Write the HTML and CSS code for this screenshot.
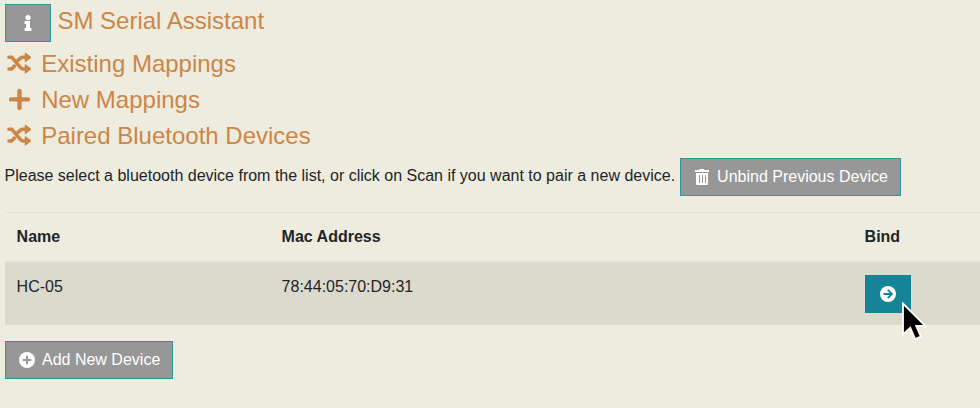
FILE: index.html
```
<!DOCTYPE html>
<html lang="en">
<head>
<meta charset="utf-8">
<title>SM Serial Assistant</title>
<link rel="stylesheet" href="styles.css">
</head>
<body>
<svg class="defs" aria-hidden="true">
  <symbol id="random" viewBox="0 0 24 24">
    <path d="M1.9 6.3H4.8L13.6 16.7Q14.7 17.9 16 17.9H18.5M1.9 17.9H4.8L7.4 15M10.9 9.4L13.6 7.1Q14.5 6.3 16 6.3H18.5" fill="none" stroke="currentColor" stroke-width="3.5" stroke-linejoin="round" stroke-linecap="round"/>
    <path d="M17.7 2.3v8q.2 1 1.3.4l4.6-3.5q.8-.8 0-1.7L19 1.9q-1.1-.5-1.3.4zM17.7 13.9v8q.2 1 1.3.4l4.6-3.5q.8-.8 0-1.7L19 13.5q-1.1-.5-1.3.4z" fill="currentColor"/>
  </symbol>
</svg>
<header class="title">
  <button class="btn info" aria-label="Information">
    <svg width="8" height="16" viewBox="0 0 8 16"><circle cx="4" cy="2.6" r="2.6" fill="currentColor"/><path d="M.6 6.1h5.4v7h1.5v2.9H.6v-2.9h1.5V9H.6z" fill="currentColor"/></svg>
  </button>
  <h4>SM Serial Assistant</h4>
</header>
<h4 class="section"><svg class="icon"><use href="#random"/></svg>Existing Mappings</h4>
<h4 class="section"><svg class="icon" viewBox="0 0 24 24"><path d="M12.5 3.9v17M4 12.4h17" stroke="currentColor" stroke-width="4.4" stroke-linecap="round"/></svg>New Mappings</h4>
<h4 class="section"><svg class="icon"><use href="#random"/></svg>Paired Bluetooth Devices</h4>
<div class="prompt">
  <span>Please select a bluetooth device from the list, or click on Scan if you want to pair a new device.</span>
  <button class="btn unbind">
    <svg width="16" height="16" viewBox="0 0 16 16"><path d="M1 1h4l.7-1h4l.7 1H15v2H1zM2 4h12v10.5Q14 16 12.5 16h-9Q2 16 2 14.5z" fill="currentColor"/><path d="M5.5 6v8M8.5 6v8M11.5 6v8" stroke="#979797"/></svg>
    <span>Unbind Previous Device</span>
  </button>
</div>
<table class="devices">
  <colgroup><col class="name"><col class="mac"><col></colgroup>
  <thead><tr><th>Name</th><th>Mac Address</th><th>Bind</th></tr></thead>
  <tbody><tr><td>HC-05</td><td>78:44:05:70:D9:31</td><td>
    <div class="bind-cell">
      <button class="btn bind" aria-label="Bind"><svg width="16" height="16" viewBox="0 0 16 16"><circle cx="8" cy="8" r="8" fill="currentColor"/><path d="M3.5 8h8.2M7.8 3.8L12 8l-4.2 4.2" fill="none" stroke="#148496" stroke-width="1.8"/></svg></button>
      <svg class="cursor" width="26" height="42" viewBox="0 0 26 42"><path d="M1 1.5V32.5L8.3 25.7L13.1 37L18.8 34.5L14.2 23.8H23.3Z" fill="#000" stroke="#fff" stroke-width="1.8"/></svg>
    </div>
  </td></tr></tbody>
</table>
<button class="btn add">
  <svg width="16" height="16" viewBox="0 0 16 16"><circle cx="8" cy="8" r="8" fill="currentColor"/><path d="M8 3.7v8.6M3.7 8h8.6" stroke="#979797" stroke-width="2"/></svg>
  <span>Add New Device</span>
</button>
</body>
</html>
```
FILE: styles.css
```
* { box-sizing: border-box; }
body {
  margin: 0;
  padding: 4px 0 0 5px;
  height: 408px;
  overflow: hidden;
  background: #eeecdf;
  color: #212529;
  font: 16px/24px "Liberation Sans", Arial, sans-serif;
}
.defs { display: none; }
h4 {
  margin: 0;
  color: #cb8648;
  font-size: 24px;
  font-weight: 400;
  line-height: 29px;
}
.title { display: flex; height: 45px; gap: 6.4px; }
.title h4 { padding-top: 2px; }
.btn {
  display: flex;
  align-items: center;
  gap: 7px;
  height: 38px;
  padding: 0 12px 0 13px;
  border: 1px solid #2c999f;
  background: #979797;
  color: #fff;
  font: inherit;
  white-space: nowrap;
}
.btn svg { flex: none; }
.info, .bind { width: 46px; padding: 0; justify-content: center; }
.info svg { margin-right: 1px; }
.section { display: flex; align-items: center; height: 29px; margin-bottom: 7px; }
.icon { width: 24px; height: 24px; margin: -2px 10.2px 0 2px; }
.prompt { display: flex; gap: 5px; height: 38px; margin: 8px 0 0 -0.5px; white-space: nowrap; }
.prompt > span { padding-top: 6px; }
.unbind { width: 221px; }
.devices {
  width: 975px;
  margin: 16px 0;
  border-collapse: separate;
  border-spacing: 0;
  table-layout: fixed;
}
.name { width: 265px; }
.mac { width: 583px; }
th, td { padding: 12px 12px 12px 11.6px; text-align: left; vertical-align: top; }
th { height: 51px; border-top: 1px solid #e3e2d9; border-bottom: 2px solid #e0e0dc; }
td { height: 62px; background: #dcdacd; }
.bind-cell { position: relative; width: 46px; height: 38px; margin-left: 0.4px; }
.bind { border-color: #148496; background: #148496; }
.bind svg { margin-right: 0.5px; }
.cursor { position: absolute; left: 37px; top: 27px; }
.add { width: 168px; }
```
